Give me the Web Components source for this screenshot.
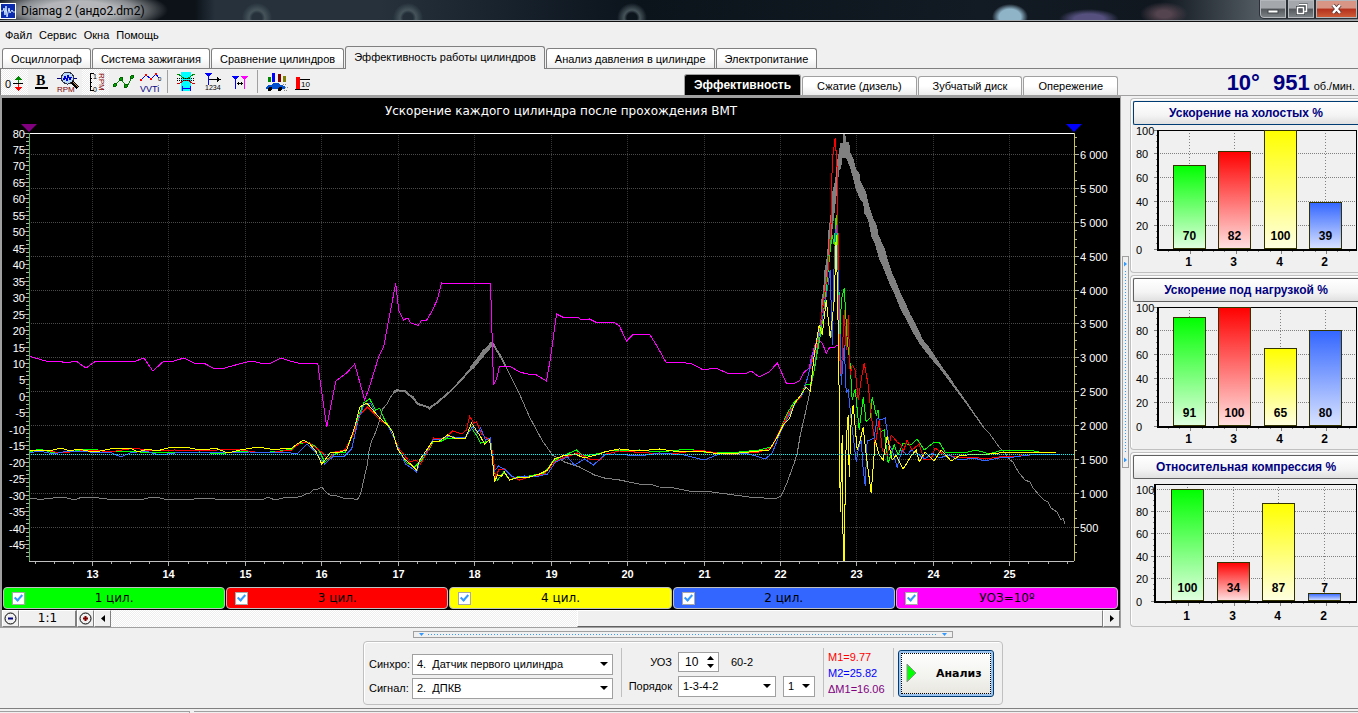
<!DOCTYPE html>
<html lang="ru">
<head>
<meta charset="utf-8">
<title>Diamag 2</title>
<style>
  html, body { margin: 0; padding: 0; }
  body {
    min-height: 100vh;
    display: flex;
    flex-direction: column;
    background: #f0f0f0;
    color: #000;
    font: 11px "Liberation Sans", Arial, sans-serif;
    overflow-x: hidden;
  }
</style>
</head>
<body>
<dm-app style="flex: 1"></dm-app>

<script>
// ---------- series, in the units of the 1046 x 428 plot box at (29, 133) ----------
const VIEW = "29 133 1046 428";

const SERIES = [
  { color: "#808080", points: "29,499 33,498 37,499 44,499 63,497 75,500 82,497 90,498 95,497 99,498 107,499 117,499 128,500 133,499 140,500 152,497 160,498 168,500 170,499 188,500 200,498 215,499 225,499 245,499 250,500 256,499 262,500 268,497 275,500 283,498 290,497 295,498 302,496 306,494 310,493 314,489 318,489 322,487 326,492 330,495 337,496 343,498 354,499 358,499 361,494 364,480 368,463 369,452 372,441 376,432 379,423 383,409 388,403 391,397 394,393 401,390 408,393 413,398 418,404 425,406 430,409 437,403 450,392 465,376 475,363 483,351 492,343 500,355 508,370 520,394 530,417 543,441 553,455 558,458 565,462 580,467 595,475 605,478 620,480 640,484 650,484 660,487 675,488 690,491 705,491 720,493 735,495 750,497 765,498 778,498 782,496 788,482 795,463 798,453 801,435 805,418 810,395 815,370 822,320" },
  { color: "#808080", width: 2, points: "394,392 397,390 401,391 405,391 408,394 413,397 418,404 425,406 430,408 437,403 450,392 457,385 465,376 475,365 483,353" },
  { color: "#808080", width: 4, points: "472,368 480,358 487,350 493,343" },
  { color: "#808080", width: 2, points: "493,343 497,350 502,358 506,366" },
  { color: "#808080", fill: true, points: "822,318 822,300 824,290 825,272 828,255 829,232 832,210 833,192 836,180 838,160 840,150 841,143 844,143 844,134 846,134 847,142 850,142 851,152 854,158 857,170 860,172 861,180 864,186 867,193 870,206 874,218 878,226 879,234 886,250 888,258 893,273 898,284 901,292 905,300 911,314 917,325 924,340 930,347 936,356 943,367 950,376 955,384 965,398 985,427 985,429 965,401 950,381 941,369 933,360 925,350 920,343 914,333 910,325 904,314 900,306 894,291 890,283 884,268 880,259 876,245 872,236 869,220 865,213 864,203 860,198 856,187 853,175 851,168 847,158 843,158 842,168 840,170 838,190 835,215 832,240 828,275 825,295" },
  { color: "#808080", points: "985,428 990,433 1000,447 1005,452 1011,460 1014,462 1017,468 1020,473 1026,480 1031,482 1034,488 1040,495 1045,500 1049,502 1052,508 1058,512 1062,520 1064,518 1066,524" },
  { color: "#ff00ff", points: "29,356 35,358 46,361 59,361 66,363 76,361 86,368 96,361 136,361 144,358 153,371 164,361 174,361 184,358 194,363 204,363 213,368 225,368 243,363 252,361 260,363 271,363 281,358 290,361 298,363 318,363 320,378 327,427 336,381 347,373 355,364 365,400 370,386 379,357 384,347 388,325 392,305 396,283 399,310 404,320 408,318 411,323 417,325 419,325 422,320 427,320 432,312 438,299 442,283 491,284 494,385 497,379 500,366 510,366 520,372 528,374 537,375 547,381 551,358 557,314 563,317 578,317 582,320 590,319 596,322 614,322 620,326 627,341 634,334 650,334 657,345 667,363 680,362 693,364 704,370 716,368 728,373 745,374 752,371 760,377 770,372 778,363 787,383 796,383 800,381 805,372 810,368 812,358 816,344 820,340 823,343 827,353 830,348 836,347 838,345 841,345" },
  { color: "#00ff00", points: "29,452 40,449 50,452 65,453 80,450 95,449 105,452 120,451 140,452 155,453 170,452 200,452 220,454 240,451 260,453 280,451 292,449 299,444 308,442 315,446 320,452 325,462 332,455 338,453 346,452 352,437 358,418 364,403 370,399 376,410 380,408 385,420 393,432 398,448 407,463 415,467 422,460 430,449 434,441 442,441 448,438 455,439 466,437 472,428 478,437 481,443 486,442 491,440 494,470 498,480 504,472 510,480 520,476 530,476 545,473 553,462 563,456 577,450 584,456 597,454 610,451 640,450 660,452 690,449 710,453 740,452 760,450 772,447 780,432 788,413 795,402 802,396 806,384 811,385 815,370 822,330 827,290 831,250 833,235 835,245 837,215 839,260 841,340 842,300 845,288 848,340 851,365 853,400 856,389 860,430 864,397 867,422 871,418 873,397 877,415 879,410 881,432 885,430 889,463 895,445 899,455 904,443 912,445 918,439 925,450 934,443 940,442 946,452 965,453 977,450 990,454 1000,451 1030,450 1040,452 1057,452" },
  { color: "#ff0000", points: "29,450 45,450 60,453 80,451 95,450 110,452 135,448 150,451 175,450 200,451 235,449 255,452 275,452 292,450 300,443 308,442 315,447 322,452 329,460 335,452 345,450 353,436 360,415 368,407 372,411 380,420 388,425 394,437 399,448 410,462 416,460 421,464 430,448 434,438 444,439 453,431 462,434 467,430 470,416 474,423 477,422 482,434 487,438 491,440 494,460 496,478 499,470 505,469 512,476 520,480 530,477 545,474 555,462 563,458 578,453 590,459 600,460 607,454 620,451 650,453 680,453 700,450 730,455 760,452 772,448 781,430 790,412 797,402 802,397 806,385 811,368 816,352 822,318 826,290 829,268 832,220 833,160 836,138 838,170 839,250 840,350 842,378 845,310 847,350 849,315 851,375 853,365 856,370 859,400 862,380 865,363 869,385 872,415 876,445 880,420 883,450 888,455 892,435 898,442 902,445 904,452 908,440 913,450 920,444 925,460 932,459 936,448 945,455 960,457 975,457 985,459 1000,457 1020,456 1042,454" },
  { color: "#3366ff", points: "29,453 40,451 53,454 68,451 90,452 110,452 121,457 130,453 145,451 160,455 175,453 200,452 225,453 250,452 270,453 285,452 297,454 307,444 314,450 325,464 334,456 344,457 352,449 358,422 364,405 371,403 375,412 380,418 388,425 394,437 399,449 406,464 412,468 417,472 421,459 427,452 433,440 442,439 450,436 458,438 466,437 473,427 478,433 481,428 486,440 491,438 493,460 494,472 499,466 506,470 512,476 517,478 525,476 535,477 548,474 556,462 568,457 575,465 585,459 594,465 605,455 615,454 640,456 660,453 685,455 705,460 720,454 745,453 760,457 766,459 773,453 782,430 790,415 797,401 804,393 809,375 815,350 822,325 828,290 831,270 833,345 835,260 837,225 840,300 842,385 845,345 847,393 849,390 852,420 855,445 857,462 859,450 862,440 864,470 866,486 868,440 871,440 875,438 878,418 882,420 886,418 890,445 893,450 898,467 903,450 908,455 912,450 920,455 926,459 933,453 940,458 950,455 960,460 975,458 985,461 1000,458 1015,457 1030,455 1060,454" },
  { color: "#ffff00", points: "29,450 37,451 45,450 53,450 61,448 70,451 78,449 88,451 100,451 115,448 130,448 138,452 148,449 157,451 168,448 185,447 195,449 205,450 215,448 228,453 240,450 258,447 270,449 280,449 292,448 299,443 304,440 310,444 316,451 322,464 326,459 331,452 340,452 347,450 355,427 360,407 367,403 374,411 380,418 388,425 393,432 398,449 405,459 412,465 417,470 420,460 427,450 433,441 440,441 448,435 455,438 466,438 472,423 480,435 485,444 490,440 493,460 495,482 498,475 502,476 505,472 510,480 520,477 530,477 540,474 548,470 555,459 563,456 575,454 585,458 597,455 605,452 615,450 620,449 640,451 660,449 680,452 700,451 720,454 740,453 760,451 770,450 778,437 784,425 790,419 795,404 803,393 807,387 811,391 815,355 820,325 823,335 827,300 831,338 835,300 837,235 839,330 840,400 841,512 843,435 844,561 845,561 846,490 847,440 849,415 850,477 852,420 854,405 858,450 861,440 864,427 867,455 872,493 876,440 880,455 884,460 888,436 893,460 897,455 904,469 912,456 917,450 920,462 926,452 935,461 942,450 952,461 960,456 975,454 990,454 1000,453 1020,452 1035,452 1057,452" }
];

const line = (x1, y1, x2, y2, attrs = "") =>
  `<line x1="${x1}" y1="${y1}" x2="${x2}" y2="${y2}" ${attrs}/>`;

// crisp 1px lines need half-pixel centres
const snap = (v) => Math.floor(v) + 0.5;

// base for elements that redraw their svg for the current size
class SizedElement extends HTMLElement {
  constructor() {
    super();
    this.shadowDOM = this.attachShadow({ mode: "open" });
  }

  connectedCallback() {
    this.render();
    this.observer = new ResizeObserver(() => this.render());
    this.observer.observe(this);
  }

  disconnectedCallback() {
    this.observer.disconnect();
  }
}

class DmPlot extends SizedElement {
  render() {
    const W = this.clientWidth;
    const H = this.clientHeight;
    const L = 27, T = 35, R = W - 46, B = H - 25;
    const w = R - L, h = B - T;
    let grid = "", ticks = "", labels = "";

    // time axis
    const xOf = (v) => snap(L + (v - 12.17) * w / 13.67);
    for (let q = 49; q <= 103; q++) {
      const x = xOf(q / 4);
      const major = q % 4 === 0;
      ticks += line(x, B, x, B + (major ? 5 : 3));
      if (major) {
        grid += line(x, T, x, B, 'stroke="#363636"');
        labels += `<text x="${x}" y="${B + 17}" text-anchor="middle" font-weight="bold">${q / 4}</text>`;
      }
    }

    // acceleration axis
    for (let q = 0; q < 104; q++) {
      const y = snap(T + q * h / 104);
      const major = q % 4 === 0;
      ticks += line(L - (major ? 5 : 3), y, L, y);
      if (major) {
        labels += `<text x="${L - 4}" y="${y + 4}" text-anchor="end">${80 - q * 5 / 4}</text>`;
      }
    }

    // rpm axis
    for (let v = 125; v <= 6300; v += 125) {
      const y = snap(B - v * h / 6320);
      const major = v % 500 === 0;
      ticks += line(R, y, R + (major ? 5 : 3), y);
      if (major) {
        const text = v < 1000 ? v : `${v / 1000 | 0} ${String(v % 1000).padStart(3, "0")}`;
        grid += line(L, y, R, y, 'stroke="#4a4a4a"');
        labels += `<text x="${R + 6}" y="${y + 4}">${text}</text>`;
      }
    }

    const curves = SERIES.map((s) => s.fill
      ? `<polygon points="${s.points}" fill="${s.color}"/>`
      : `<polyline points="${s.points}" stroke="${s.color}" stroke-width="${s.width || 1}"/>`).join("");
    const level = snap(T + h * 0.75);

    this.shadowDOM.innerHTML = `
      <style>
        :host { display: block; contain: size; background: #000; overflow: hidden; }
        svg { display: block; }
        .lines { shape-rendering: crispEdges; }
        polyline { fill: none; vector-effect: non-scaling-stroke; }
        text { fill: #fff; font: 11px "Liberation Sans", Arial, sans-serif; }
        text[font-weight] { font-weight: bold; }
        .title { font: 12px "DejaVu Sans", Verdana, sans-serif; }
      </style>
      <svg width="${W}" height="${H}" fill="none">
        <text class="title" x="${(W / 2)}" y="17" text-anchor="middle">Ускорение каждого цилиндра после прохождения ВМТ</text>
        <g class="lines">
          <g stroke-dasharray="1 1">${grid}</g>
          <svg x="${L}" y="${T}" width="${w}" height="${h}" viewBox="${VIEW}" preserveAspectRatio="none">${curves}</svg>
          ${line(L, level, R, level, 'stroke="#00ffff" stroke-dasharray="1 1"')}
          <g stroke="#b0b0b0">${ticks}</g>
          ${line(L, T + 0.5, R, T + 0.5, 'stroke="#fff"')}
          ${line(L, B + 0.5, R, B + 0.5, 'stroke="#c0c0c0"')}
          ${line(L + 0.5, T, L + 0.5, B, 'stroke="#4cb84c"')}
          ${line(R + 0.5, T, R + 0.5, B, 'stroke="#c8c840"')}
        </g>
        <path d="M${L - 8} ${T - 9}h16l-8 8z" fill="#800080"/>
        <path d="M${R - 8} ${T - 9}h16l-8 8z" fill="#0000ff"/>
        ${labels}
      </svg>`;
  }
}
customElements.define("dm-plot", DmPlot);

class DmBars extends SizedElement {
  render() {
    const W = this.clientWidth;
    const H = this.clientHeight;
    const values = this.getAttribute("values").split(",").map(Number);
    const head = Number(this.getAttribute("headroom") || 0);
    const names = [1, 3, 4, 2];
    const colors = ["#00ff00", "#ff0000", "#ffff00", "#3366ff"];
    const light = ["#e0ffe0", "#ffe0e0", "#ffffe0", "#d8e2ff"];
    const L = head ? 22 : 25;
    const T = 5, R = W - 1, B = H - (head ? 24 : 22);
    const h = B - T - head;
    const step = (R - L) / 4.4;
    let back = "", bars = "", texts = "", defs = "";

    for (let v = 0; v <= 100; v += 5) {
      const y = snap(B - v * h / 100);
      const major = v % 20 === 0;
      back += line(L - (major ? 4 : 2), y, L, y);
      if (major) {
        if (v) back += line(L, y, R, y, 'stroke-dasharray="1 1"');
        texts += `<text class="axis" x="3" y="${y + 4}">${v}</text>`;
      }
    }
    for (let t = 1; t < 18; t++) {
      const x = snap(L + t * step / 4 - 1);
      back += line(x, B, x, B + (t % 4 === 3 ? 5 : 3));
    }

    values.forEach((v, i) => {
      const x = snap(L + step * (0.7 + i));
      const y = snap(B - v * h / 100);
      defs += `<linearGradient id="g${i}" x2="0" y2="1"><stop stop-color="${colors[i]}"/><stop offset="1" stop-color="${light[i]}"/></linearGradient>`;
      back += line(x, T, x, B, 'stroke-dasharray="1 2"');
      bars += `<rect x="${x - 16}" y="${y}" width="32" height="${Math.max(snap(B) - 1 - y, 1)}" fill="url(#g${i})" stroke="#333300"/>`;
      texts += `<text x="${x}" y="${B - 9}" text-anchor="middle">${v}</text>
        <text x="${x - 1}" y="${H - 5}" text-anchor="middle">${names[i]}</text>`;
    });

    this.shadowDOM.innerHTML = `
      <style>
        :host { display: block; contain: size; overflow: hidden; }
        svg { display: block; }
        text { font: bold 12px "Liberation Sans", Arial, sans-serif; }
        .axis { font: 11px "Liberation Sans", Arial, sans-serif; }
        .lines { shape-rendering: crispEdges; }
      </style>
      <svg width="${W}" height="${H}">
        <defs>${defs}</defs>
        <g class="lines">
          <g stroke="#808080">${back}</g>
          ${line(L, T + 0.5, R, T + 0.5, 'stroke="#000"')}
          ${line(R - 0.5, T, R - 0.5, B, 'stroke="#000"')}
          ${line(L, T, L, B + 1, 'stroke="#000" stroke-width="2"')}
          ${line(L - 1, B + 0.5, R, B + 0.5, 'stroke="#000" stroke-width="2"')}
          ${bars}
        </g>
        ${texts}
      </svg>`;
  }
}
customElements.define("dm-bars", DmBars);

// plain elements: styles and markup only
function define(tag, css, html) {
  customElements.define(tag, class extends HTMLElement {
    constructor() {
      super();
      this.attachShadow({ mode: "open" });
    }

    connectedCallback() {
      const content = typeof html === "function" ? html(this) : html;
      this.shadowRoot.innerHTML = `<style>* { box-sizing: border-box; } button { font: inherit; color: inherit; margin: 0; }${css}</style>${content}`;
    }
  });
}

define("dm-bar-panel", `
  :host {
    flex: 1;
    display: flex;
    flex-direction: column;
    min-height: 130px;
    padding: 2px 0 1px 2px;
    border: 1px solid #c0c0c0;
    border-right: 0;
    border-radius: 4px 0 0 4px;
    box-shadow: inset 1px 1px #fff;
  }
  button {
    height: 24px;
    padding: 0;
    border: 1px solid #606060;
    border-right: 0;
    border-radius: 2px 0 0 2px;
    background: linear-gradient(#fff, #f4f4f4 60%, #e0e0e0);
    color: #000080;
    font-size: 12px;
    font-weight: bold;
    flex: none;
  }
  :host([selected]) button { border-color: #003c74; }
  dm-bars { flex: 1; }
`, (el) => `
  <button type="button"><slot></slot></button>
  <dm-bars values="${el.getAttribute("values")}" headroom="${el.getAttribute("headroom") || 0}"></dm-bars>
`);

define("dm-title-bar", `
  :host {
    display: flex;
    height: 22px;
    border-bottom: 1px solid #101010;
    box-shadow: inset 0 -1px #a8adb2;
    background:
      radial-gradient(ellipse 90px 22px at 78px 10px, #b4b6b9 40%, #85898d 65%, transparent 100%),
      radial-gradient(circle at 257px 18px, transparent 5px, #46545a 8px, transparent 15px),
      radial-gradient(circle at 408px 18px, transparent 5px, #46545a 8px, transparent 15px),
      radial-gradient(circle at 632px 18px, transparent 5px, #46545a 8px, transparent 15px),
      radial-gradient(ellipse 18px 13px at 1010px 17px, #8fb4c8 60%, transparent),
      radial-gradient(ellipse 30px 10px at 1089px 19px, #55507e 50%, transparent),
      radial-gradient(ellipse 24px 12px at 1164px 14px, #54444f 30%, transparent),
      linear-gradient(90deg, #0c1218 0 195px, #26313c 215px 380px, #1b2631 470px, #0b131b 640px, #121a23 980px, #10171f 1160px, #4c545c 1250px, #8a8f94);
  }
  svg { display: block; }
  .icon { margin: 3px 5px 0 0; }
  .name { flex: 1; font: 12px Roboto, "Segoe UI", sans-serif; line-height: 22px; }
  .buttons { display: flex; height: 19px; }
  button {
    display: grid;
    place-items: center;
    padding: 0;
    border: 1px solid #2a3036;
    border-top: 0;
    box-shadow: inset 0 0 0 1px #b4b8bc;
    background: linear-gradient(#a4a8ac 45%, #54585c 50%, #80868a);
    width: 28px;
  }
  button:first-child { border-radius: 0 0 0 5px; }
  .close { width: 43px; background: linear-gradient(#d89484 45%, #b4301c 50%, #d0603c); }
`, `
  <svg class="icon" width="16" height="16"><rect width="16" height="16" fill="#fff"/><rect x="1" y="1" width="14" height="14" fill="#0a2bb0"/><path d="M1 8h2l1-3 1 7 1-9 1 11 2-9 1 5 2-3 1 2h2" stroke="#cfe4ff" fill="none"/></svg>
  <span class="name">Diamag 2 (андо2.dm2)</span>
  <div class="buttons">
    <button type="button" aria-label="Свернуть"><svg width="12" height="12"><rect x="1" y="7" width="10" height="3" fill="#fff" stroke="#44484c"/></svg></button>
    <button type="button" aria-label="Развернуть"><svg width="13" height="13"><path d="M4 1.5h7v7h-2M2.500 4.500h6v6h-6z" fill="none" stroke="#44484c" stroke-width="3"/><path d="M4 1.500h7.500v7h-2M2.500 4.500h6v6h-6z" fill="none" stroke="#fff" stroke-width="1.500"/></svg></button>
    <button type="button" class="close" aria-label="Закрыть"><svg width="13" height="12"><path d="M3 2l7 8M10 2l-7 8" stroke="#503030" stroke-width="4"/><path d="M3 2l7 8M10 2l-7 8" stroke="#fff" stroke-width="2.500"/></svg></button>
  </div>
`);

define("dm-menu", `
  :host { display: flex; align-items: center; gap: 7px; height: 26px; padding-left: 5px; }
  button { border: 0; padding: 0; background: none; }
`, `
  <button type="button">Файл</button>
  <button type="button">Сервис</button>
  <button type="button">Окна</button>
  <button type="button">Помощь</button>
`);

define("dm-tab", `
  :host { display: flex; align-items: flex-end; }
  button {
    height: 20px;
    padding: 0 8px;
    border: 1px solid #808080;
    border-bottom: 0;
    border-radius: 3px 3px 0 0;
    background: linear-gradient(#fff 50%, #ececec);
    white-space: nowrap;
    line-height: 18px;
  }
  :host([wide]) button { padding: 0 14px; height: 19px; border-color: #a0a0a0; }
  :host([active]) button { height: 23px; margin-bottom: -1px; padding-bottom: 3px; background: #f0f0f0; }
  :host([wide][active]) button { height: 21px; margin: 0; padding: 0 9px; background: #000; color: #fff; font-weight: bold; font-size: 12px; }
`, `<button type="button"><slot></slot></button>`);

define("dm-tabs", `
  :host { display: flex; align-items: flex-end; gap: 1px; padding-left: 2px; height: 21px; border-bottom: 1px solid #808080; }
`, `<slot></slot>`);

define("dm-tool", `
  :host { display: block; }
  button { display: block; width: 27px; height: 26px; padding: 0; border: 0; background: none; }
  :host([pressed]) button { background: repeating-conic-gradient(#fff 0 25%, #eaeaea 0 50%) 0 0 / 2px 2px; }
`, (el) => `<button type="button" aria-label="${el.getAttribute("label")}"><slot></slot></button>`);

define("dm-toolbar", `
  :host { display: flex; height: 27px; border-bottom: 1px solid #a0a0a0; }
  .tools { display: flex; flex: 1; border-left: 1px solid #808080; }
  i { width: 1px; margin: 1px 4px 2px; background: #a0a0a0; }
  svg { display: block; shape-rendering: crispEdges; fill: none; }
  text { font: 8px "Liberation Sans", Arial, sans-serif; fill: #000; }
  .subtabs { display: flex; align-items: flex-end; gap: 1px; }
  .readout { display: flex; width: 240px; justify-content: flex-end; align-items: baseline; color: #000080; font-size: 22px; font-weight: bold; gap: 13px; line-height: 27px; }
  small { font-size: 11px; font-weight: normal; color: #000; margin: 0 3px 0 -9px; }
`, `
  <div class="tools">
    <dm-tool pressed label="Ноль"><svg width="27" height="26"><text x="4" y="19" style="font-size:11px">0</text><path d="M12 14.500h10" stroke="#000"/><path d="M17.500 9v5" stroke="#080" /><path d="M14 11h7l-3.500-4z" fill="#080"/><path d="M17.500 15v4" stroke="#f00"/><path d="M14 18h7l-3.500 4z" fill="#f00"/></svg></dm-tool>
    <dm-tool label="Толщина линий"><svg width="27" height="26"><text x="8" y="16" style="font:bold 14px 'Liberation Serif',serif">B</text><path d="M7 18.500h13" stroke="#000" stroke-width="2"/></svg></dm-tool>
    <dm-tool label="Обороты"><svg width="27" height="26" shape-rendering="auto"><path d="M2 9.500h20" stroke="#000080"/><circle cx="12.500" cy="9" r="6" fill="#b8d8f8" stroke="#334"/><path d="M8 9l1 2 1-4 2 5 1-6 2 5 1-3 1 1" stroke="#00c"/><path d="M17 13l6 6" stroke="#000" stroke-width="3"/><path d="M18 13l5 5" stroke="#d09030"/><text x="2" y="23" style="fill:#800000">RPM</text></svg></dm-tool>
    <dm-tool pressed label="Шкала оборотов"><svg width="27" height="26"><path d="M12 4.500h-4v17h4M8 9.500h2M8 13.500h2M8 17.500h2" stroke="#000"/><text x="11" y="10" style="font-size:7px">1</text><text x="11" y="23" style="font-size:7px">0</text><text transform="translate(17 4) rotate(90)" style="fill:#800000">RPM</text></svg></dm-tool>
    <dm-tool label="Точки"><svg width="27" height="26"><path d="M6 16l6-6 6 8 5-10" stroke="#080"/><g fill="#00a000" stroke="#006000"><circle cx="6" cy="16" r="1.500"/><circle cx="12" cy="10" r="1.500"/><circle cx="17" cy="17" r="1.500"/><circle cx="23" cy="8" r="1.500"/></g></svg></dm-tool>
    <dm-tool label="VVTi"><svg width="27" height="26"><path d="M5 11l5-5 5 4 5-5 3 4" stroke="#00f"/><g fill="#f00"><rect x="4" y="10" width="2" height="2"/><rect x="9" y="5" width="2" height="2"/><rect x="14" y="9" width="2" height="2"/><rect x="19" y="4" width="2" height="2"/></g><text x="22" y="12" style="font-size:6px">0</text><text x="4" y="23" style="fill:#000080;font-size:9px">VVTi</text></svg></dm-tool>
    <i></i>
    <dm-tool label="Область"><svg width="27" height="26"><rect x="9" y="3" width="10" height="19" fill="#0ff"/><path d="M5 5c4 0 5 5 9 5s5-5 9-5" stroke="#080"/><path d="M5 15c4 0 5-4 9-4s5 4 9 4" stroke="#c00"/><path d="M5 9.500h18M5 11.500h18" stroke="#000" stroke-dasharray="1 1"/><path d="M10 19.500h8M10 17v5M18 17v5" stroke="#00f"/></svg></dm-tool>
    <dm-tool label="Маркер"><svg width="27" height="26"><path d="M6 4h7l-3.500 4z" fill="#00f"/><path d="M9.500 5v11" stroke="#00f"/><path d="M10 10.500h9" stroke="#000"/><path d="M18 8l4 2.500-4 2.500z" fill="#000"/><text x="6" y="21" style="font-size:7px">1234</text></svg></dm-tool>
    <dm-tool label="Между маркерами"><svg width="27" height="26"><path d="M6 7h7l-3.500 4z" fill="#00f"/><path d="M9.500 8v12" stroke="#00f"/><path d="M15 7h7l-3.500 4z" fill="#f0f"/><path d="M18.500 8v12" stroke="#f0f"/><path d="M11 14.500h6M12.500 13v3M15.500 13v3" stroke="#000"/></svg></dm-tool>
    <i></i>
    <dm-tool label="Автомобиль"><svg width="27" height="26"><path d="M6 8h3v5h-3z" fill="#080"/><path d="M10 4h3v9h-3z" fill="#00f"/><path d="M16 5h3v8h-3z" fill="#800000"/><path d="M21 7h3v6h-3z" fill="#808000"/><path d="M4 18l2-2h3l2-2h5l3 2 4 1v3h-19z" fill="#0050d0"/><circle cx="8" cy="20" r="2" fill="#000"/><circle cx="18" cy="20" r="2" fill="#000"/><path d="M21 15.500h4M23 18.500h3M22 21.500h4" stroke="#888" stroke-dasharray="1 1"/></svg></dm-tool>
    <dm-tool label="Столбец"><svg width="27" height="26"><rect x="7" y="8" width="4" height="12" fill="#f00"/><path d="M11 10.500h10M6 20.500h14" stroke="#000"/><text x="12" y="18">10</text></svg></dm-tool>
  </div>
  <div class="subtabs">
    <dm-tab wide active>Эффективность</dm-tab>
    <dm-tab wide>Сжатие (дизель)</dm-tab>
    <dm-tab wide>Зубчатый диск</dm-tab>
    <dm-tab wide>Опережение</dm-tab>
  </div>
  <div class="readout"><span>10°</span><span>951</span><small>об./мин.</small></div>
`);

define("dm-legend-item", `
  :host { flex: 1; display: block; }
  label {
    display: flex;
    align-items: center;
    height: 22px;
    padding: 0 21px 0 8px;
    border: 1px solid #c0c0c0;
    border-radius: 4px;
    background: var(--series);
    font: 12px "DejaVu Sans", Verdana, sans-serif;
  }
  input {
    appearance: none;
    width: 13px;
    height: 13px;
    margin: 0;
    border: 1px solid #a8a8a8;
    background: #fff;
    display: grid;
    place-items: center;
  }
  input:checked::after {
    content: "";
    width: 3px;
    height: 6px;
    border: solid #3399ff;
    border-width: 0 2px 2px 0;
    transform: rotate(42deg);
    margin-bottom: 2px;
  }
  span { flex: 1; text-align: center; }
`, `<label><input type="checkbox" checked><span><slot></slot></span></label>`);

define("dm-scroll-row", `
  :host { display: flex; height: 17px; background: #f0f0f0; font: 12px "DejaVu Sans", Verdana, sans-serif; }
  button { width: 17px; padding: 0; border: 1px solid; border-color: #fff #808080 #808080 #fff; background: #f0f0f0; display: grid; place-items: center; overflow: hidden; }
  .scale { width: 58px; line-height: 15px; border-right-width: 2px; }
  .track { flex: 1; display: flex; justify-content: flex-end; background: repeating-conic-gradient(#fff 0 25%, #eeeeee 0 50%) 0 0 / 2px 2px; }
  .thumb { width: 53%; border: 1px solid; border-color: #fff #808080 #606060 #fff; background: #f0f0f0; }
`, `
  <button type="button" aria-label="Уменьшить"><svg width="13" height="13"><circle cx="6.500" cy="6.500" r="5.500" fill="none" stroke="#000"/><path d="M4 6.500h5" stroke="#000080" stroke-width="2"/></svg></button>
  <button type="button" class="scale">1:1</button>
  <button type="button" aria-label="Увеличить"><svg width="13" height="13"><circle cx="6.500" cy="6.500" r="5.500" fill="none" stroke="#000"/><path d="M4 6.500h5M6.500 4v5" stroke="#800000" stroke-width="2"/></svg></button>
  <button type="button" aria-label="Влево"><svg width="4" height="7"><path d="M4 0v7L0 3.500z"/></svg></button>
  <div class="track"><div class="thumb"></div></div>
  <button type="button" aria-label="Вправо"><svg width="4" height="7"><path d="M0 0v7l4-3.500z"/></svg></button>
`);

define("dm-splitter", `
  :host { display: flex; align-items: center; justify-content: center; }
  div { display: flex; align-items: center; gap: 4px; padding: 0 5px; width: 40%; height: 7px; border: 1px solid #a0a0a0; }
  i { flex: 1; height: 1px; background: repeating-linear-gradient(90deg, #3399ff 0 1px, transparent 1px 3px); }
  b { width: 5px; height: 3px; background: #3399ff; clip-path: polygon(0 0, 100% 0, 50% 100%); }
  :host([vertical]) div { flex-direction: column; padding: 5px 0; width: 7px; height: 40%; }
  :host([vertical]) i { width: 1px; background: repeating-linear-gradient(#3399ff 0 1px, transparent 1px 3px); }
  :host([vertical]) b { width: 3px; height: 5px; clip-path: polygon(0 0, 100% 50%, 0 100%); }
`, `<div><b></b><i></i><b></b></div>`);

define("dm-select", `
  :host { display: flex; align-items: center; }
  label { flex: none; width: var(--label, auto); padding-right: var(--label-gap, 0); text-align: var(--label-align, left); }
  .box { flex: 1; display: grid; align-items: center; }
  select, svg { grid-area: 1 / 1; }
  select { appearance: none; width: 100%; height: 21px; padding: 0 4px; border: 1px solid #a0a0a0; border-radius: 0; background: #fff; color: #000; font: inherit; }
  svg { justify-self: end; margin-right: 5px; pointer-events: none; }
`, (el) => {
  const label = el.getAttribute("label");
  return `
    ${label ? `<label for="field">${label}</label>` : ""}
    <div class="box">
      <select id="field" aria-label="${label || el.getAttribute("name")}"><option>${el.getAttribute("value")}</option></select>
      <svg width="8" height="4"><path d="M0 0h8L4 4z"/></svg>
    </div>`;
});

define("dm-spin", `
  :host { display: flex; align-items: center; gap: 6px; }
  label { width: 46px; text-align: right; }
  .box { display: flex; width: 41px; height: 20px; border: 1px solid #a0a0a0; background: #fff; }
  input { width: 24px; min-width: 0; padding: 0 0 0 6px; border: 0; background: none; font: inherit; font-size: 12px; }
  .arrows { display: flex; flex-direction: column; justify-content: center; gap: 4px; flex: 1; align-items: center; }
  .arrows button { display: block; padding: 0; border: 0; background: none; line-height: 0; }
  svg { display: block; }
  output { margin-left: 6px; }
`, `
  <label for="angle">УОЗ</label>
  <div class="box">
    <input id="angle" value="10">
    <span class="arrows">
      <button type="button" aria-label="Больше"><svg width="7" height="4"><path d="M0 4h7L3.500 0z"/></svg></button>
      <button type="button" aria-label="Меньше"><svg width="7" height="4"><path d="M0 0h7L3.500 4z"/></svg></button>
    </span>
  </div>
  <output>60-2</output>
`);

define("dm-controls", `
  :host { display: flex; align-items: center; padding: 0 8px 0 5px; height: 64px; border: 1px solid #c0c0c0; border-radius: 4px; box-shadow: inset 1px 1px #fff; }
  .col { display: flex; flex-direction: column; gap: 3px; }
  .sources { width: 244px; --label: 43px; }
  .sources { padding-top: 6px; }
  .engine { padding-top: 2px; gap: 4px; }
  .engine { width: 189px; }
  .order { display: grid; grid-template-columns: 150px 32px; gap: 7px; --label: 52px; --label-align: right; --label-gap: 6px; }
  i { align-self: stretch; width: 1px; margin: 6px 4px 7px 8px; background: #c0c0c0; }
  .marks { gap: 0; width: 57px; line-height: 16px; }
  .run {
    display: flex;
    align-items: center;
    gap: 18px;
    width: 96px;
    height: 47px;
    padding: 0 7px;
    border: 1px solid #003c74;
    border-radius: 3px;
    outline: 1px dotted #000;
    outline-offset: -4px;
    background: linear-gradient(#fff, #f2f2ee 60%, #e6e4dc);
    box-shadow: inset 0 0 0 2px #9cc4f0;
    font: bold 11px "DejaVu Sans", Verdana, sans-serif;
  }
`, `
  <div class="col sources">
    <dm-select label="Синхро:" value="4.&nbsp; Датчик первого цилиндра"></dm-select>
    <dm-select label="Сигнал:" value="2.&nbsp; ДПКВ"></dm-select>
  </div>
  <i></i>
  <div class="col engine">
    <dm-spin></dm-spin>
    <div class="order">
      <dm-select label="Порядок" value="1-3-4-2"></dm-select>
      <dm-select name="Номер цилиндра" value="1"></dm-select>
    </div>
  </div>
  <i></i>
  <div class="col marks">
    <span style="color:#ff0000">M1=9.77</span>
    <span style="color:#0000ff">M2=25.82</span>
    <span style="color:#800080">ΔM1=16.06</span>
  </div>
  <i></i>
  <button type="button" class="run"><svg width="12" height="20"><path d="M1 1v18l9-9z" fill="#00ff00" stroke="#909090"/></svg>Анализ</button>
`);

define("dm-app", `
  :host { display: flex; flex-direction: column; }
  .main { flex: 1; display: flex; min-height: 360px; }
  .scope { flex: 1; min-width: 0; display: flex; flex-direction: column; border: solid #a0a0a0; border-width: 2px 1px 1px 2px; background: #000; }
  dm-plot { flex: 1; }
  .legend { display: flex; gap: 1px; padding: 1px 2px 1px 1px; }
  dm-splitter[vertical] { width: 9px; }
  aside { width: 228px; display: flex; flex-direction: column; gap: 2px; padding: 2px 0 1px; }
  .bottom { display: flex; flex-direction: column; align-items: center; padding: 3px 0 3px 8px; gap: 3px; border-bottom: 1px solid #808080; }
  .bottom dm-splitter { width: 100%; }
  footer { display: flex; height: 4px; gap: 4px; padding-top: 2px; }
  footer div { border-top: 1px solid #a0a0a0; flex: 1; }
  footer div:first-child { flex: 0 0 190px; border-right: 1px solid #a0a0a0; }
`, `
  <dm-title-bar></dm-title-bar>
  <dm-menu></dm-menu>
  <dm-tabs>
    <dm-tab>Осциллограф</dm-tab>
    <dm-tab>Система зажигания</dm-tab>
    <dm-tab>Сравнение цилиндров</dm-tab>
    <dm-tab active>Эффективность работы цилиндров</dm-tab>
    <dm-tab>Анализ давления в цилиндре</dm-tab>
    <dm-tab>Электропитание</dm-tab>
  </dm-tabs>
  <dm-toolbar></dm-toolbar>
  <div class="main">
    <div class="scope">
      <dm-plot></dm-plot>
      <div class="legend">
        <dm-legend-item style="--series:#00ff00">1 цил.</dm-legend-item>
        <dm-legend-item style="--series:#ff0000">3 цил.</dm-legend-item>
        <dm-legend-item style="--series:#ffff00">4 цил.</dm-legend-item>
        <dm-legend-item style="--series:#3366ff">2 цил.</dm-legend-item>
        <dm-legend-item style="--series:#ff00ff">УОЗ=10º</dm-legend-item>
      </div>
      <dm-scroll-row></dm-scroll-row>
    </div>
    <dm-splitter vertical></dm-splitter>
    <aside>
      <dm-bar-panel selected values="70,82,100,39">Ускорение на холостых %</dm-bar-panel>
      <dm-bar-panel values="91,100,65,80">Ускорение под нагрузкой %</dm-bar-panel>
      <dm-bar-panel values="100,34,87,7" headroom="5">Относительная компрессия %</dm-bar-panel>
    </aside>
  </div>
  <div class="bottom">
    <dm-splitter></dm-splitter>
    <dm-controls></dm-controls>
  </div>
  <footer><div></div><div></div></footer>
`);
</script>
</body>
</html>
